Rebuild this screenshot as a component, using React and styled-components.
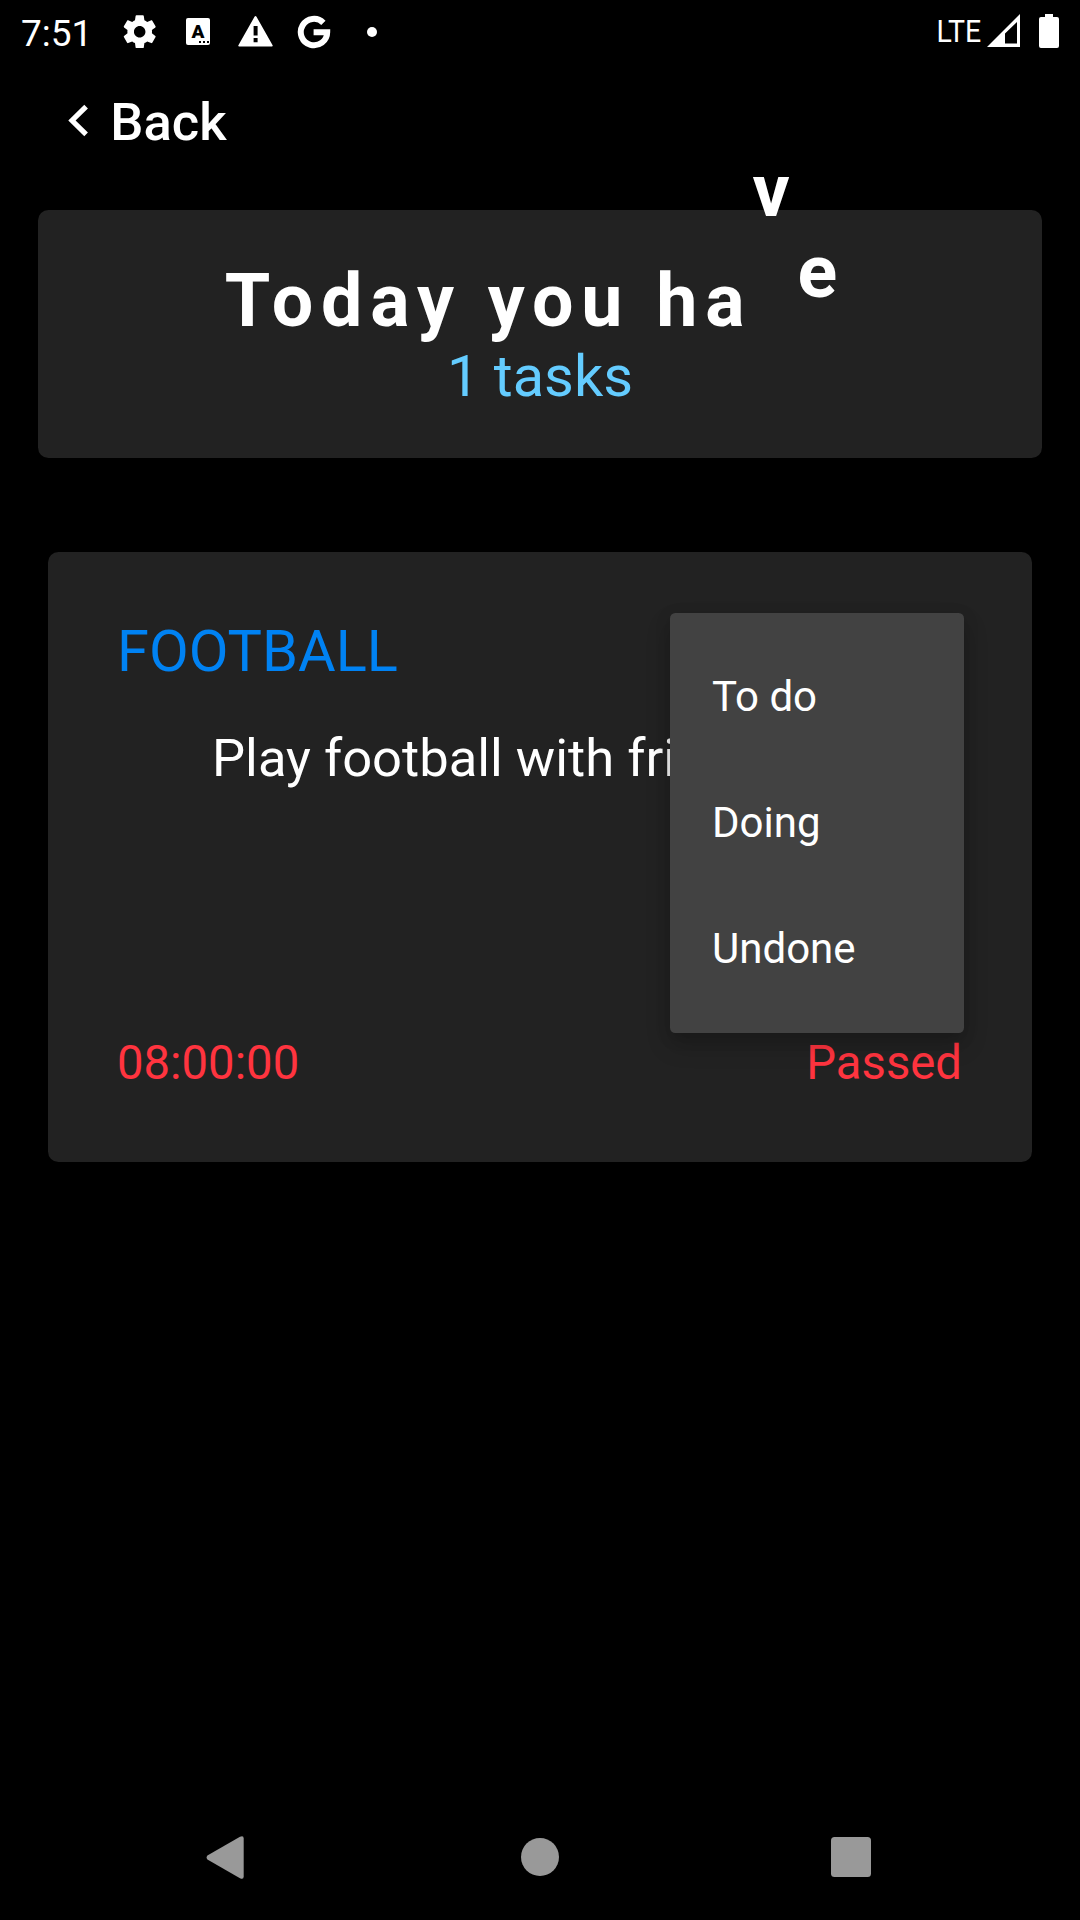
import React from "react";
import styled, { createGlobalStyle } from "styled-components";

const GlobalStyle = createGlobalStyle`
  * { box-sizing: border-box; }
  body {
    margin: 0;
    background: #000;
    font-family: Roboto, "Noto Sans", sans-serif;
    color: #fff;
  }
`;

const Screen = styled.div`
  width: 1080px;
  height: 1920px;
  display: flex;
  flex-direction: column;
  background: #000;
  overflow: hidden;
`;

const StatusBar = styled.header`
  height: 63px;
  flex: none;
  display: flex;
  align-items: flex-start;
  justify-content: space-between;
  padding: 0 21px;
`;

const StatusGroup = styled.div`
  display: flex;
  align-items: center;
  height: ${(p) => p.$h}px;
`;

const Clock = styled.span`
  width: 70px;
  margin-right: 29.3px;
  font-size: 37px;
  line-height: 43px;
  padding-top: 3px;
`;

const Network = styled.span`
  font-size: 32px;
  line-height: 38px;
  margin-right: 5.5px;
  transform: scaleX(0.89);
  transform-origin: right center;
`;

const Glyph = styled.svg`
  display: block;
  flex: none;
  width: ${(p) => p.$w}px;
  height: ${(p) => p.$h || p.$w}px;
  margin-left: ${(p) => p.$gap || 0}px;
  fill: ${(p) => p.$color || "#fff"};
`;

const Spelling = styled.span`
  width: 24px;
  height: 27px;
  margin-left: 26.3px;
  border-radius: 2px;
  background: #fff;
  color: #000;
  display: flex;
  flex-direction: column;
  align-items: center;
  font-size: 19px;
  font-weight: 900;
  line-height: 27px;
`;

const Dots = styled.span`
  align-self: flex-end;
  display: flex;
  gap: 2px;
  margin-top: -4px;
  padding-right: 1px;
  &::before, &::after, i { content: ""; width: 2px; height: 2px; background: #000; }
`;

const AppBar = styled.nav`
  height: 147px;
  flex: none;
  display: flex;
  align-items: flex-start;
  padding: 28px 0 0 68px;
`;

const BackLabel = styled.span`
  font-size: 52.5px;
  font-weight: 500;
  line-height: 62px;
  margin-left: 20.3px;
`;

const SummaryCard = styled.section`
  flex: none;
  height: 248px;
  margin: 0 37.6px;
  border-radius: 10.5px;
  background: #222;
  display: flex;
  flex-direction: column;
  padding-top: 48px;
`;

const Headline = styled.h1`
  margin: 0 0 0 187.1px;
  font-size: 73.5px;
  font-weight: 700;
  line-height: 86px;
  letter-spacing: 7.8px;
  white-space: pre;
`;

const Letter = styled.span`
  display: inline-block;
  transform: translateY(${(p) => -p.$lift}px);
`;

const TaskCount = styled.p`
  margin: -2px 0 0;
  font-size: 57.75px;
  line-height: 68px;
  text-align: center;
  color: #64ccff;
`;

const TaskCard = styled.section`
  position: relative;
  flex: none;
  height: 609.4px;
  margin: 94.4px 48px 0;
  padding: 65px 70px 0 69px;
  border-radius: 10.5px;
  background: #222;
  display: flex;
  flex-direction: column;
`;

const TaskTitle = styled.h2`
  margin: 0;
  font-size: 57.75px;
  font-weight: 400;
  line-height: 68px;
  color: #0082f3;
`;

const TaskText = styled.p`
  margin: 42px 0 0 95px;
  font-size: 52.5px;
  line-height: 62px;
  white-space: nowrap;
`;

const TaskFooter = styled.div`
  display: flex;
  justify-content: space-between;
  margin-top: auto;
  padding-bottom: 71px;
  font-size: 47.25px;
  line-height: 56px;
  color: #ff343f;
`;

const Menu = styled.ul`
  position: absolute;
  top: 60.6px;
  right: 68.3px;
  width: 293.7px;
  height: 420px;
  margin: 0;
  padding: 21px 42px;
  list-style: none;
  border-radius: 5.25px;
  background: #424242;
  box-shadow: 0 12px 24px rgba(0, 0, 0, 0.2), 0 4px 16px rgba(0, 0, 0, 0.14);
`;

const MenuItem = styled.li`
  height: 126px;
  display: flex;
  align-items: center;
  font-size: 42px;
  line-height: 49px;
`;

const NavBar = styled.footer`
  height: 126px;
  flex: none;
  margin-top: auto;
  display: flex;
  align-items: center;
  padding-left: 206px;
`;

const menuItems = ["To do", "Doing", "Undone"];

export default function App() {
  return (
    <Screen>
      <GlobalStyle />
      <StatusBar>
        <StatusGroup $h={63}>
          <Clock>7:51</Clock>
          <Glyph $w={39.4} viewBox="0 0 24 24">
            <path d="M19.43 12.98c.04-.32.07-.64.07-.98s-.03-.66-.07-.98l2.11-1.65c.19-.15.24-.42.12-.64l-2-3.46c-.12-.22-.39-.3-.61-.22l-2.49 1c-.52-.4-1.08-.73-1.69-.98l-.38-2.65C14.46 2.18 14.25 2 14 2h-4c-.25 0-.46.18-.49.42l-.38 2.65c-.61.25-1.17.59-1.69.98l-2.49-1c-.23-.09-.49 0-.61.22l-2 3.46c-.13.22-.07.49.12.64l2.11 1.65c-.04.32-.07.65-.07.98s.03.66.07.98l-2.11 1.65c-.19.15-.24.42-.12.64l2 3.46c.12.22.39.3.61.22l2.49-1c.52.4 1.08.73 1.69.98l.38 2.65c.03.24.24.42.49.42h4c.25 0 .46-.18.49-.42l.38-2.65c.61-.25 1.17-.59 1.69-.98l2.49 1c.23.09.49 0 .61-.22l2-3.46c.12-.22.07-.49-.12-.64l-2.11-1.65zM12 15.5c-1.93 0-3.5-1.57-3.5-3.5s1.57-3.5 3.5-3.5 3.5 1.57 3.5 3.5-1.57 3.5-3.5 3.5z" />
          </Glyph>
          <Spelling>
            A
            <Dots><i /></Dots>
          </Spelling>
          <Glyph $w={35} $h={31} $gap={28.4} viewBox="0 0 35 31">
            <path
              fillRule="evenodd"
              d="M16.5.8q1-1.4 2 0L34.6 29.2Q35.1 30.6 33.8 30.6H1.2Q-.1 30.6.4 29.2ZM15.6 10v9.6h4V10zM15.6 22v4.2h4V22z"
            />
          </Glyph>
          <Glyph $w={34} $gap={23.6} viewBox="0 0 34 34">
            <path
              d="M26.4 7.8A13.2 13.2 0 1 0 30.2 17.2H16.6"
              fill="none"
              stroke="#fff"
              strokeWidth="6"
            />
          </Glyph>
          <Glyph $w={10} $gap={36} viewBox="0 0 10 10">
            <circle cx="5" cy="5" r="5" />
          </Glyph>
        </StatusGroup>
        <StatusGroup $h={61}>
          <Network>LTE</Network>
          <Glyph $w={33} viewBox="0 0 33 33">
            <path fillRule="evenodd" d="M33 0V33H0ZM30 8L18 19.5V29.5H30Z" />
          </Glyph>
          <Glyph $w={20} $h={34} $gap={19} viewBox="0 0 20 34">
            <path d="M6 0h8v3h4q2 0 2 2v27q0 2-2 2H2q-2 0-2-2V5q0-2 2-2h4z" />
          </Glyph>
        </StatusGroup>
      </StatusBar>

      <AppBar>
        <Glyph $w={22} $h={62} viewBox="0 0 22 62">
          <path d="M18.1 15.7L4 29.5L18.1 43.3" fill="none" stroke="#fff" strokeWidth="5.2" />
        </Glyph>
        <BackLabel>Back</BackLabel>
      </AppBar>

      <SummaryCard>
        <Headline>
          Today you ha<Letter $lift={110}>v</Letter>
          <Letter $lift={29}>e</Letter>
        </Headline>
        <TaskCount>1 tasks</TaskCount>
      </SummaryCard>

      <TaskCard>
        <TaskTitle>FOOTBALL</TaskTitle>
        <TaskText>Play football with friends</TaskText>
        <TaskFooter>
          <span>08:00:00</span>
          <span>Passed</span>
        </TaskFooter>
        <Menu>
          {menuItems.map((item) => (
            <MenuItem key={item}>{item}</MenuItem>
          ))}
        </Menu>
      </TaskCard>

      <NavBar>
        <Glyph $w={38} $h={43} $color="#999" viewBox="0 0 38 43">
          <path d="M1.4 19.5L34 .8q3.7-1.6 3.7 1.7v38q0 3.3-3.7 1.7L1.4 23.5q-1.6-2 0-4z" />
        </Glyph>
        <Glyph $w={38} $gap={277} $color="#999" viewBox="0 0 38 38">
          <circle cx="19" cy="19" r="19" />
        </Glyph>
        <Glyph $w={40} $gap={272} $color="#999" viewBox="0 0 40 40">
          <rect width="40" height="40" rx="3.5" />
        </Glyph>
      </NavBar>
    </Screen>
  );
}
